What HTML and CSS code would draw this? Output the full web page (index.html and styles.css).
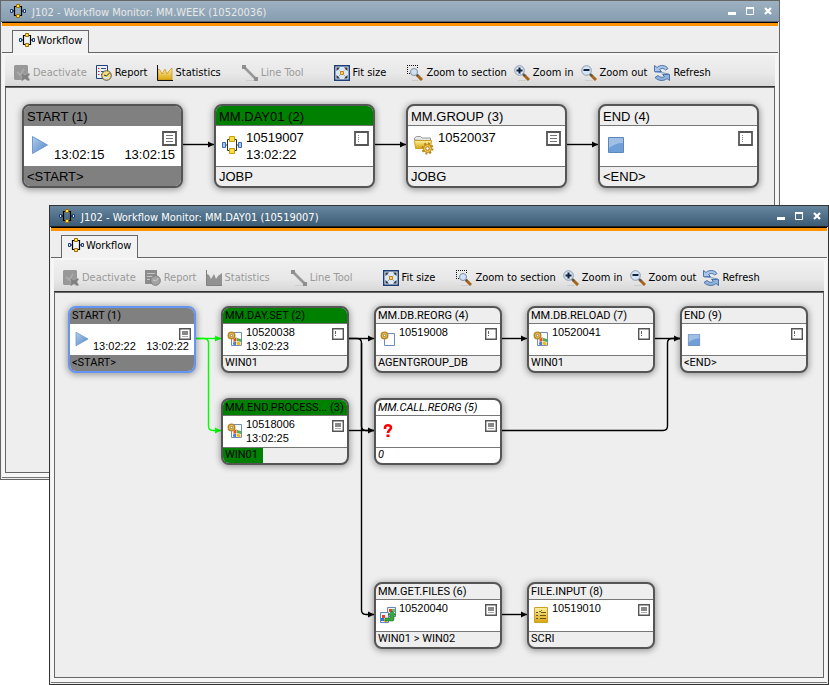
FILE: index.html
```
<!DOCTYPE html>
<html lang="en">
<head>
    <meta charset="UTF-8">
    <meta name="viewport" content="width=device-width, initial-scale=1.0">
    <title>Workflow Monitor</title>
    <link rel="stylesheet" href="styles.css">
</head>
<body>

<!-- icon sprites -->
<svg class="sprites" aria-hidden="true">
    <defs>
        <linearGradient id="g-blue" x1="0" y1="0" x2="1" y2="1">
            <stop offset="0" stop-color="#b4cdec"/><stop offset="1" stop-color="#4f86c6"/>
        </linearGradient>
        <linearGradient id="g-gold" x1="0" y1="0" x2="0" y2="1">
            <stop offset="0" stop-color="#fdf0a0"/><stop offset="1" stop-color="#d9a50e"/>
        </linearGradient>
        <marker id="arrow" markerUnits="userSpaceOnUse" markerWidth="7" markerHeight="8" refX="6" refY="4" orient="auto"><path d="M0 1L6 4L0 7z" fill="#000"/></marker>
        <marker id="arrow-green" markerUnits="userSpaceOnUse" markerWidth="7" markerHeight="8" refX="6" refY="4" orient="auto"><path d="M0 1L6 4L0 7z" fill="#0f0"/></marker>
    </defs>
    <symbol id="flow" viewBox="0 0 16 16">
        <path d="M6 3.500H4.500V12.500H6M10 3.500H11.500V12.500H10M2.500 8H4.500M11.500 8H13.500" fill="none" stroke="#000" stroke-width="1.200"/>
        <path d="M6.500 1.500h3v3h-3zM6.500 11.500h3v3h-3z" fill="#ffe640" stroke="#9a6a08"/>
        <path d="M.5 6.500h2v3h-2zM13.500 6.500h2v3h-2z" fill="#dbe8fa" stroke="#1c3f80"/>
    </symbol>
    <symbol id="flow-big" viewBox="0 0 20 20">
        <path d="M7 4.500H5.500V15.500H7M13 4.500H14.500V15.500H13M4 10h1.500M14.500 10H16" fill="none" stroke="#333"/>
        <path d="M7.500 1.500h5v5h-5zM7.500 13.500h5v5h-5z" fill="#ffe03a" stroke="#c89a10"/>
        <path d="M.5 7.500h3v5h-3zM16.500 7.500h3v5h-3z" fill="#a9c8ee" stroke="#3a6cb0"/>
    </symbol>
    <symbol id="deactivate" viewBox="0 0 16 16">
        <path d="M1 0h12l1 1v9l-5 5H1l-1-1V1z" fill="#989898"/>
        <path d="M3 7l3 3 4-6" fill="none" stroke="#aaa" stroke-width="2"/>
        <path d="M8 8l3 2 3-2 2 1-2 3 2 3-2 1-3-2-3 2-1-1 1-3-1-3z" fill="#808080" stroke="#bbb" stroke-width=".5"/>
    </symbol>
    <symbol id="report" viewBox="0 0 16 16">
        <path d="M.5.500h11v13H.5z" fill="#eaf1fb" stroke="#1f3f7c"/>
        <path d="M2 3.500h1.500M2 6.500h1.500M2 9.500h1.500" stroke="#d02020"/><path d="M5 3.500h5M5 6.500h3M5 9.500h1" stroke="#3c4c70"/>
        <circle cx="10.500" cy="10.500" r="4.800" fill="#f3dc7a" stroke="#55554a"/>
        <path d="M7 12a4 4 0 0 0 7 0z" fill="#d5e3f2"/><path d="M10.500 11l3-3M10.500 11L8 10" stroke="#333"/>
    </symbol>
    <symbol id="report-off" viewBox="0 0 16 16">
        <path d="M0 0h12v14H0z" fill="#8c8c8c"/><path d="M2 3.500h8M2 6.500h6M2 9.500h3" stroke="#c4c4c4"/>
        <circle cx="10.500" cy="10.500" r="4.800" fill="#a4a4a4" stroke="#7c7c7c"/>
        <path d="M10.500 11l3-3M10.500 11L8 10" stroke="#ccc"/>
    </symbol>
    <symbol id="stats" viewBox="0 0 16 16">
        <path d="M1 15V4l2 1 2 4 3-5 2 5 2-3 3-3v12z" fill="url(#g-gold)" stroke="#c8891e" stroke-width=".7"/>
        <path d="M.5 0v15.500H16" fill="none" stroke="#111"/>
    </symbol>
    <symbol id="stats-off" viewBox="0 0 16 16">
        <path d="M1 15V4l2 1 2 4 3-5 2 5 2-3 4-3v12z" fill="#929292"/><path d="M.5 0v15.500H16" fill="none" stroke="#808080"/>
    </symbol>
    <symbol id="line" viewBox="0 0 16 16">
        <path d="M2 2l12 12" stroke="#989898" stroke-width="2.600"/>
        <path d="M0 0h4v4H0zM12 12h4v4h-4z" fill="#8e8e8e"/><path d="M4 15.500h8" stroke="#ccc"/>
    </symbol>
    <symbol id="fit" viewBox="0 0 16 16">
        <path d="M.7.700h14.600v14.600H.7z" fill="#d9e7f7" stroke="#1d3c78" stroke-width="1.400"/>
        <path d="M3 3l10 10M13 3L3 13" stroke="#889" stroke-width="1" stroke-dasharray="1 1"/>
        <path d="M2.500 2.500H6L2.500 6zM13.500 2.500H10L13.500 6zM2.500 13.500H6L2.500 10zM13.500 13.500H10L13.500 10z" fill="#333"/>
        <path d="M6.500 6.500h3v3h-3z" fill="#fbd36b" stroke="#c98510" stroke-width="1"/>
    </symbol>
    <symbol id="zoom-section" viewBox="0 0 16 16">
        <path d="M0 .500h11M.5 0v9M10.500 0v3M0 8.500h3" fill="none" stroke="#111" stroke-dasharray="1 1"/>
        <path d="M5 15.500h7" stroke="#ccc"/>
        <path d="M10 10l5 5" stroke="#a5651a" stroke-width="3"/><path d="M9.500 9.500l1.500 1.500" stroke="#555" stroke-width="2"/>
        <circle cx="7" cy="7" r="3.500" fill="#cfe1f7" stroke="#7e8da0"/>
    </symbol>
    <symbol id="zoom-in" viewBox="0 0 16 16">
        <path d="M4 15.500h8" stroke="#ccc"/>
        <path d="M9.500 9.500L15 15" stroke="#a5651a" stroke-width="3"/><path d="M8.500 8.500L11 11" stroke="#555" stroke-width="2"/>
        <circle cx="5.500" cy="5.500" r="4.800" fill="#d5e5f8" stroke="#8c98a8"/>
        <path d="M5.500 2.500v6M2.500 5.500h6" stroke="#152238" stroke-width="2"/>
    </symbol>
    <symbol id="zoom-out" viewBox="0 0 16 16">
        <path d="M4 15.500h8" stroke="#ccc"/>
        <path d="M9.500 9.500L15 15" stroke="#a5651a" stroke-width="3"/><path d="M8.500 8.500L11 11" stroke="#555" stroke-width="2"/>
        <circle cx="5.500" cy="5.500" r="4.800" fill="#d5e5f8" stroke="#8c98a8"/>
        <path d="M2.500 5h6" stroke="#152238" stroke-width="2"/>
    </symbol>
    <symbol id="refresh" viewBox="0 0 16 16">
        <path d="M.5.500L3 2.500C6-.5 12 0 14 3.500L11.500 5C10 3 7.500 3 5.500 4.500L7.500 6.500H.5z" fill="#a9c7ea" stroke="#41689f" stroke-width=".9"/>
        <path d="M15.500 15.500L13 13.500C10 16.500 4 16 1 12.500L4 10.500C6 12.500 8.500 13 10.500 11.500L8.500 9.500h7z" fill="#8fb4de" stroke="#41689f" stroke-width=".9"/>
        <path d="M1 7c4 0 9 1 14 2" stroke="#6b93c5" fill="none"/>
    </symbol>
    <symbol id="play" viewBox="0 0 16 20"><path d="M.5 1.500L15.500 10L.5 18.500z" fill="url(#g-blue)" stroke="#6f9ace"/></symbol>
    <symbol id="stop" viewBox="0 0 16 16">
        <path d="M.5.500h15v15H.5z" fill="#6f9fd6" stroke="#5f86b8"/><path d="M1 1h14v5C9 6 5 8 1 11z" fill="#9fbfe5"/>
    </symbol>
    <symbol id="folder" viewBox="0 0 20 20">
        <path d="M.5 5V3l2-1.500h4L8 3h8.500v3z" fill="#e8e8e4" stroke="#999"/>
        <path d="M.5 5.500h17l-1 8H1.500z" fill="url(#g-gold)" stroke="#c9a02c"/>
        <circle cx="13.500" cy="13.500" r="5" fill="none" stroke="#b5851a" stroke-width="2" stroke-dasharray="2 1.900"/>
        <circle cx="13.500" cy="13.500" r="4" fill="#f6cc48" stroke="#b5851a"/>
        <circle cx="13.500" cy="13.500" r="1.800" fill="#fff" stroke="#a87916"/>
    </symbol>
    <symbol id="job" viewBox="0 0 16 16">
        <path d="M4.500 2.500h10v12h-10z" fill="#fff" stroke="#6f8cc0"/>
        <circle cx="4.500" cy="4.500" r="3.200" fill="#f2cf6c" stroke="#b98a2a" stroke-width="1.600"/><circle cx="4.500" cy="4.500" r="1.200" fill="#fff" stroke="#8a6114" stroke-width=".8"/>
    </symbol>
    <symbol id="job-win" viewBox="0 0 16 16">
        <path d="M4.500 1.500h10v13h-10z" fill="#fff" stroke="#6f8cc0"/>
        <path d="M6.500 8l3-2v4l-3 1z" fill="#e0502c"/><path d="M10 7l4 1v3l-4-1z" fill="#53b03a"/>
        <path d="M6 11.500l3-1v4l-3-1z" fill="#4a7fd4"/><path d="M9.500 10.500l4 1v3l-4-1z" fill="#f0b818"/>
        <circle cx="4.500" cy="4.500" r="3.200" fill="#f2cf6c" stroke="#b98a2a" stroke-width="1.600"/><circle cx="4.500" cy="4.500" r="1.200" fill="#fff" stroke="#8a6114" stroke-width=".8"/>
    </symbol>
    <symbol id="question" viewBox="0 0 16 16">
        <path d="M5 6V4.500C5 1.500 11 1.500 11 4.500C11 7 8 7 8 10" fill="none" stroke="#f00" stroke-width="2.600"/>
        <path d="M6.500 11.500h3v2.500h-3z" fill="#f00"/>
    </symbol>
    <symbol id="transfer" viewBox="0 0 16 16">
        <path d="M7.500.500h8v9h-8z" fill="#eef3fb" stroke="#6785bd"/><path d="M.5 5.500h8v10h-8z" fill="#eef3fb" stroke="#6785bd"/>
        <path d="M9 2h3v3H9z" fill="#e0442c"/><path d="M12 2h3v3h-3z" fill="#5fc25a"/>
        <path d="M2 8h3v3H2z" fill="#e0442c"/><path d="M1 11h3v3H1z" fill="#3b74d0"/><path d="M4 12h3v3H4z" fill="#f0c020"/>
        <path d="M5 11h5V8H8l4-4 4 4h-2v5l-1 1H5z" fill="#36a83e" stroke="#11641a" stroke-width=".5"/>
    </symbol>
    <symbol id="script" viewBox="0 0 16 16">
        <path d="M1.500.500h13v15h-13z" fill="url(#g-gold)" stroke="#c9a227"/>
        <path d="M3 5.500h2M3 8.500h2M3 11.500h2" stroke="#555"/><path d="M6 4l1 1 2-2" fill="none" stroke="#8a6c10"/><path d="M8 5.500h5M7 8.500h6M7 11.500h6" stroke="#6b5510"/>
    </symbol>
    <symbol id="box-list" viewBox="0 0 15 15">
        <path d="M1 1h13v13H1z" fill="#fff" stroke="#555" stroke-width="1.800"/><path d="M4 4.500h7M4 7.500h7M4 10.500h7" stroke="#777"/>
    </symbol>
    <symbol id="box-note" viewBox="0 0 15 15">
        <path d="M1 1h13v13H1z" fill="#fff" stroke="#555" stroke-width="1.800"/><path d="M4.500 4v1M4.500 6v1M4.500 8v1M4.500 10v1" stroke="#888"/>
    </symbol>
    <symbol id="box-list-s" viewBox="0 0 12 12">
        <path d="M.7.700h10.600v10.600H.7z" fill="#fff" stroke="#555" stroke-width="1.400"/><path d="M3 3h6v4H3z" fill="#888"/><path d="M3 8.500h6" stroke="#aaa"/>
    </symbol>
    <symbol id="box-note-s" viewBox="0 0 12 12">
        <path d="M.7.700h10.600v10.600H.7z" fill="#fff" stroke="#555" stroke-width="1.400"/><path d="M3.500 3v3M3.500 7v1" stroke="#666"/>
    </symbol>
    <symbol id="win-min" viewBox="0 0 8 8"><path d="M0 5h8v3H0z" fill="#fff"/></symbol>
    <symbol id="win-max" viewBox="0 0 8 8"><path d="M.5 1h7v6.500h-7z" fill="none" stroke="#fff"/><path d="M0 1h8" stroke="#fff" stroke-width="2"/></symbol>
    <symbol id="win-close" viewBox="0 0 8 8"><path d="M1 1l6 6M7 1L1 7" stroke="#fff" stroke-width="2.200"/></symbol>
</svg>

<div class="desktop">

    <!-- back window -->
    <section class="window window-back">
        <header class="titlebar">
            <svg class="icon"><use href="#flow"/></svg>
            <span class="title">J102 - Workflow Monitor: MM.WEEK (10520036)</span>
            <button class="win-button" aria-label="Minimize"><svg><use href="#win-min"/></svg></button>
            <button class="win-button" aria-label="Maximize"><svg><use href="#win-max"/></svg></button>
            <button class="win-button" aria-label="Close"><svg><use href="#win-close"/></svg></button>
        </header>
        <div class="tabs">
            <button class="tab"><svg class="icon"><use href="#flow"/></svg>Workflow</button>
        </div>
        <div class="window-body">
            <div class="toolbar">
                <button class="tool" disabled><svg class="icon"><use href="#deactivate"/></svg>Deactivate</button>
                <button class="tool"><svg class="icon"><use href="#report"/></svg>Report</button>
                <button class="tool"><svg class="icon"><use href="#stats"/></svg>Statistics</button>
                <button class="tool tool-line" disabled><svg class="icon"><use href="#line"/></svg>Line Tool</button>
                <button class="tool tool-fit"><svg class="icon"><use href="#fit"/></svg>Fit size</button>
                <div class="tool-group">
                    <button class="tool"><svg class="icon"><use href="#zoom-section"/></svg>Zoom to section</button>
                    <button class="tool"><svg class="icon"><use href="#zoom-in"/></svg>Zoom in</button>
                    <button class="tool"><svg class="icon"><use href="#zoom-out"/></svg>Zoom out</button>
                    <button class="tool"><svg class="icon"><use href="#refresh"/></svg>Refresh</button>
                </div>
            </div>
            <div class="canvas canvas-large">
                <svg class="links">
                    <path d="M177 56.500H208" marker-end="url(#arrow)"/>
                    <path d="M369 56.500H400" marker-end="url(#arrow)"/>
                    <path d="M561 56.500H592" marker-end="url(#arrow)"/>
                </svg>
                <div class="node start">
                    <div class="node-title">START (1)</div>
                    <div class="node-body">
                        <svg class="node-icon"><use href="#play"/></svg>
                        <div class="node-text"><div class="times"><span>13:02:15</span><span>13:02:15</span></div></div>
                        <svg class="node-box"><use href="#box-list"/></svg>
                    </div>
                    <div class="node-foot">&lt;START&gt;</div>
                </div>
                <div class="node active">
                    <div class="node-title">MM.DAY01 (2)</div>
                    <div class="node-body">
                        <svg class="node-icon"><use href="#flow-big"/></svg>
                        <div class="node-text"><div>10519007</div><div>13:02:22</div></div>
                        <svg class="node-box"><use href="#box-note"/></svg>
                    </div>
                    <div class="node-foot">JOBP</div>
                </div>
                <div class="node">
                    <div class="node-title">MM.GROUP (3)</div>
                    <div class="node-body">
                        <svg class="node-icon"><use href="#folder"/></svg>
                        <div class="node-text"><div>10520037</div></div>
                        <svg class="node-box"><use href="#box-list"/></svg>
                    </div>
                    <div class="node-foot">JOBG</div>
                </div>
                <div class="node">
                    <div class="node-title">END (4)</div>
                    <div class="node-body">
                        <svg class="node-icon stop"><use href="#stop"/></svg>
                        <div class="node-text"></div>
                        <svg class="node-box"><use href="#box-note"/></svg>
                    </div>
                    <div class="node-foot">&lt;END&gt;</div>
                </div>
            </div>
        </div>
    </section>

    <!-- front window -->
    <section class="window window-front">
        <header class="titlebar">
            <svg class="icon"><use href="#flow"/></svg>
            <span class="title">J102 - Workflow Monitor: MM.DAY01 (10519007)</span>
            <button class="win-button" aria-label="Minimize"><svg><use href="#win-min"/></svg></button>
            <button class="win-button" aria-label="Maximize"><svg><use href="#win-max"/></svg></button>
            <button class="win-button" aria-label="Close"><svg><use href="#win-close"/></svg></button>
        </header>
        <div class="tabs">
            <button class="tab"><svg class="icon"><use href="#flow"/></svg>Workflow</button>
        </div>
        <div class="window-body">
            <div class="toolbar">
                <button class="tool" disabled><svg class="icon"><use href="#deactivate"/></svg>Deactivate</button>
                <button class="tool" disabled><svg class="icon"><use href="#report-off"/></svg>Report</button>
                <button class="tool" disabled><svg class="icon"><use href="#stats-off"/></svg>Statistics</button>
                <button class="tool tool-line" disabled><svg class="icon"><use href="#line"/></svg>Line Tool</button>
                <button class="tool tool-fit"><svg class="icon"><use href="#fit"/></svg>Fit size</button>
                <div class="tool-group">
                    <button class="tool"><svg class="icon"><use href="#zoom-section"/></svg>Zoom to section</button>
                    <button class="tool"><svg class="icon"><use href="#zoom-in"/></svg>Zoom in</button>
                    <button class="tool"><svg class="icon"><use href="#zoom-out"/></svg>Zoom out</button>
                    <button class="tool"><svg class="icon"><use href="#refresh"/></svg>Refresh</button>
                </div>
            </div>
            <div class="canvas canvas-small">
                <svg class="links">
                    <g class="green">
                        <path d="M141 45.500H166" marker-end="url(#arrow-green)"/>
                        <path d="M141 45.500H149Q153.500 45.500 153.500 50V133Q153.500 137.500 158 137.500H166" marker-end="url(#arrow-green)"/>
                    </g>
                    <path d="M294 45.500H319" marker-end="url(#arrow)"/>
                    <path d="M294 137.500H319" marker-end="url(#arrow)"/>
                    <path d="M294 45.500H302Q306.500 45.500 306.500 50V133Q306.500 137.500 311 137.500H319"/>
                    <path d="M306.500 50V317Q306.500 321.500 311 321.500H319" marker-end="url(#arrow)"/>
                    <path d="M447 45.500H472" marker-end="url(#arrow)"/>
                    <path d="M600 45.500H625" marker-end="url(#arrow)"/>
                    <path d="M447 137.500H608Q612.500 137.500 612.500 133V50Q612.500 45.500 617 45.500H625"/>
                    <path d="M447 321.500H472" marker-end="url(#arrow)"/>
                </svg>
                <div class="node start selected row1 col1">
                    <div class="node-title">START (1)</div>
                    <div class="node-body">
                        <svg class="node-icon"><use href="#play"/></svg>
                        <div class="node-text"><div class="times"><span>13:02:22</span><span>13:02:22</span></div></div>
                        <svg class="node-box"><use href="#box-list-s"/></svg>
                    </div>
                    <div class="node-foot">&lt;START&gt;</div>
                </div>
                <div class="node active row1 col2">
                    <div class="node-title">MM.DAY.SET (2)</div>
                    <div class="node-body">
                        <svg class="node-icon"><use href="#job-win"/></svg>
                        <div class="node-text"><div>10520038</div><div>13:02:23</div></div>
                        <svg class="node-box"><use href="#box-note-s"/></svg>
                    </div>
                    <div class="node-foot">WIN01</div>
                </div>
                <div class="node row1 col3">
                    <div class="node-title">MM.DB.REORG (4)</div>
                    <div class="node-body">
                        <svg class="node-icon"><use href="#job"/></svg>
                        <div class="node-text"><div>10519008</div></div>
                        <svg class="node-box"><use href="#box-note-s"/></svg>
                    </div>
                    <div class="node-foot">AGENTGROUP_DB</div>
                </div>
                <div class="node row1 col4">
                    <div class="node-title">MM.DB.RELOAD (7)</div>
                    <div class="node-body">
                        <svg class="node-icon"><use href="#job-win"/></svg>
                        <div class="node-text"><div>10520041</div></div>
                        <svg class="node-box"><use href="#box-note-s"/></svg>
                    </div>
                    <div class="node-foot">WIN01</div>
                </div>
                <div class="node row1 col5">
                    <div class="node-title">END (9)</div>
                    <div class="node-body">
                        <svg class="node-icon stop"><use href="#stop"/></svg>
                        <div class="node-text"></div>
                        <svg class="node-box"><use href="#box-note-s"/></svg>
                    </div>
                    <div class="node-foot">&lt;END&gt;</div>
                </div>
                <div class="node active row2 col2">
                    <div class="node-title">MM.END.PROCESS... (3)</div>
                    <div class="node-body">
                        <svg class="node-icon"><use href="#job-win"/></svg>
                        <div class="node-text"><div>10518006</div><div>13:02:25</div></div>
                        <svg class="node-box"><use href="#box-list-s"/></svg>
                    </div>
                    <div class="node-foot"><div class="progress" style="width: 33%">WIN01</div></div>
                </div>
                <div class="node external row2 col3">
                    <div class="node-title">MM.CALL.REORG (5)</div>
                    <div class="node-body">
                        <svg class="node-icon"><use href="#question"/></svg>
                        <div class="node-text"></div>
                        <svg class="node-box"><use href="#box-list-s"/></svg>
                    </div>
                    <div class="node-foot">0</div>
                </div>
                <div class="node row4 col3">
                    <div class="node-title">MM.GET.FILES (6)</div>
                    <div class="node-body">
                        <svg class="node-icon"><use href="#transfer"/></svg>
                        <div class="node-text"><div>10520040</div></div>
                        <svg class="node-box"><use href="#box-list-s"/></svg>
                    </div>
                    <div class="node-foot">WIN01 &gt; WIN02</div>
                </div>
                <div class="node row4 col4">
                    <div class="node-title">FILE.INPUT (8)</div>
                    <div class="node-body">
                        <svg class="node-icon"><use href="#script"/></svg>
                        <div class="node-text"><div>10519010</div></div>
                        <svg class="node-box"><use href="#box-list-s"/></svg>
                    </div>
                    <div class="node-foot">SCRI</div>
                </div>
            </div>
        </div>
    </section>

</div>
</body>
</html>
```
FILE: styles.css
```
* {
    box-sizing: border-box;
}

body {
    margin: 0;
    background: #fff;
    font-family: Tahoma, "DejaVu Sans Condensed", "DejaVu Sans", sans-serif;
    font-size: 11px;
    color: #000;
}

button {
    margin: 0;
    padding: 0;
    border: 0;
    background: none;
    font: inherit;
    color: inherit;
    white-space: nowrap;
}

svg {
    display: block;
}

.sprites {
    position: absolute;
    width: 0;
    height: 0;
}

.icon {
    width: 16px;
    height: 16px;
    flex: none;
}

/* windows */
.desktop {
    position: relative;
    height: 100vh;
    min-height: 640px;
    overflow: hidden;
}

.window {
    position: absolute;
    display: flex;
    flex-direction: column;
    border: 1px solid #666;
    background: #eee;
}

.window-back {
    top: 0;
    left: 0;
    right: 49px;
    bottom: 205px;
}

.window-front {
    top: 205px;
    left: 49px;
    right: 0;
    bottom: 0;
    border-color: #333;
}

.titlebar {
    display: flex;
    align-items: center;
    height: 21px;
    padding: 0 7px 0 9px;
    border-bottom: 1px solid #5c6670;
    background: linear-gradient(#9db1c1, #879eb1);
    color: #e8e8e8;
}

.window-front .titlebar {
    background: linear-gradient(#67869f, #3c5b74);
    border-bottom-color: #222;
    color: #fff;
}

.title {
    flex: 1;
    margin-left: 6px;
    padding-top: 2px;
}

.win-button {
    width: 8px;
    height: 8px;
    margin-left: 10px;
}

.win-button svg {
    width: 8px;
    height: 8px;
}

.tabs {
    display: flex;
    margin: 1px 1px 0;
    padding: 4px 10px 0;
    border-top: 3px solid #ff9200;
    border-bottom: 1px solid #666;
    box-shadow: 0 -1px 0 #000;
}

.tab {
    display: flex;
    align-items: center;
    gap: 2px;
    height: 23px;
    margin-bottom: -1px;
    padding: 0 6px 4px 6px;
    border: 1px solid #666;
    border-bottom: 0;
    background: #f2f2f2;
}

.window-body {
    display: flex;
    flex-direction: column;
    flex: 1;
    margin: 0 1px 1px;
    padding: 2px 3px 4px;
    border-bottom: 1px solid #777;
    background: #f6f6f6;
}

.toolbar {
    display: flex;
    align-items: center;
    gap: 9px;
    height: 32px;
    padding: 4px 9px 0;
    border-bottom: 1px solid #333;
    background: linear-gradient(#f0f0f0, #e8e8e8 60%, #d8d8d8);
}

.tool {
    display: flex;
    align-items: center;
    gap: 3px;
}

.tool:disabled {
    color: #999;
}

.tool-group {
    display: flex;
    gap: 7px;
    margin-left: 12px;
}

.tool-line {
    margin-left: 12px;
}

.tool-fit {
    margin-left: 21px;
}

/* workflow canvas */
.canvas {
    position: relative;
    display: grid;
    flex: 1;
    align-content: start;
    border: 1px solid #666;
    background: #eee;
    font-family: Arial, "Liberation Sans", sans-serif;
}

.canvas-large {
    grid-template-columns: repeat(4, 161px);
    column-gap: 31px;
    padding: 16px;
    font-size: 13px;
}

.canvas-small {
    grid-template-columns: repeat(5, 128px);
    grid-template-rows: repeat(4, 67px);
    gap: 25px;
    padding: 13px;
}

.row1 { grid-row: 1; }
.row2 { grid-row: 2; }
.row4 { grid-row: 4; }
.col1 { grid-column: 1; }
.col2 { grid-column: 2; }
.col3 { grid-column: 3; }
.col4 { grid-column: 4; }
.col5 { grid-column: 5; }

.links {
    position: absolute;
    top: 0;
    left: 0;
    width: 100%;
    height: 100%;
    fill: none;
    stroke: #000;
    stroke-width: 1.4px;
}

.links .green {
    stroke: #0f0;
}

marker path {
    stroke: none;
}

.node {
    position: relative;
    overflow: hidden;
    border: 2px solid #555;
    border-radius: 8px;
    background: #eee;
    box-shadow: 0 1px 6px 1px rgba(0, 0, 0, .35);
}

.node-title {
    height: 20px;
    padding: 1px 3px 0;
    border-bottom: 1px solid #777;
    line-height: 20px;
    white-space: nowrap;
}

.node-body {
    display: flex;
    gap: 4px;
    height: 40px;
    padding: 3px 4px 0 6px;
    background: #fff;
    line-height: 17px;
}

.node-icon {
    width: 20px;
    height: 20px;
    margin-top: 6px;
    flex: none;
}

.node-icon.stop {
    height: 16px;
    margin-top: 8px;
}

.node-text {
    flex: 1;
}

.node-box {
    position: absolute;
    top: 25px;
    right: 4px;
    width: 15px;
    height: 15px;
}

.times {
    display: flex;
    justify-content: space-between;
    padding: 17px 2px 0 0;
}

.node-foot {
    height: 20px;
    padding: 0 3px;
    border-top: 1px solid #777;
    line-height: 19px;
}

.canvas-small .node-title,
.canvas-small .node-foot {
    height: 16px;
    padding: 0 2px;
    font-family: Roboto, Arial, sans-serif;
    line-height: 16px;
}

.canvas-small .node-foot {
    line-height: 14px;
}

.canvas-small .node-body {
    gap: 3px;
    height: 31px;
    padding: 1px 4px 0;
    line-height: 14px;
}

.canvas-small .node-icon {
    width: 16px;
    height: 16px;
    margin-top: 6px;
}

.canvas-small .node-icon.stop {
    height: 12px;
    margin-top: 9px;
}

.canvas-small .node-box {
    top: 20px;
    right: 3px;
    width: 12px;
    height: 12px;
}

.canvas-small .times {
    padding: 14px 1px 0 0;
}

.active .node-title {
    background: #008000;
}

.start .node-title,
.start .node-foot {
    border-color: #808080;
    background: #808080;
}

.selected {
    border-color: #6495f5;
}

.external {
    background: #fff;
    font-style: italic;
}

.progress {
    height: 15px;
    margin-left: -2px;
    padding-left: 2px;
    background: #008000;
}
```
